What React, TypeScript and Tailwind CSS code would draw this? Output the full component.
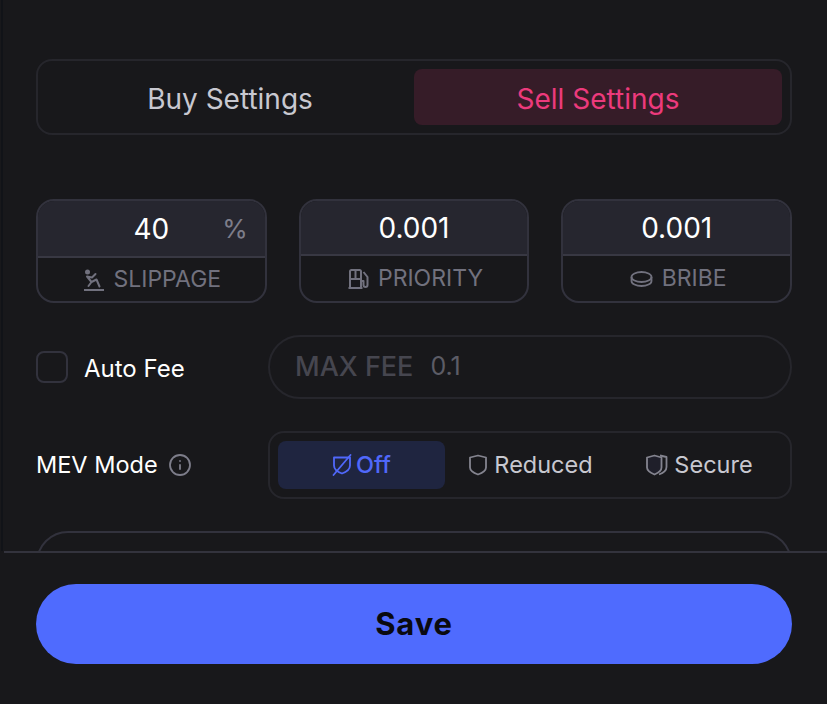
import { Info } from 'lucide-react'

function SlipIcon() {
  return (
    <svg width="20" height="22" viewBox="0 0 20 22" fill="none" stroke="currentColor" strokeWidth="2">
      <circle cx="3.500" cy="3" r="2.500" fill="currentColor" stroke="none" />
      <path d="M3 7.500l5 1 3.500-3.500M3 7.500l4.500 5.500-3 4M7.500 13l5-2.500 3 7" strokeLinecap="round" strokeLinejoin="round" />
      <path d="M0 21h20" />
    </svg>
  )
}

function PumpIcon() {
  return (
    <svg width="21" height="20" viewBox="0 0 21 20" fill="none" stroke="currentColor" strokeWidth="2">
      <path d="M2 19V2.500A1.500 1.500 0 0 1 3.500 1h8A1.500 1.500 0 0 1 13 2.500V19M0.500 19h14M2 10h11M7.500 1v9" />
      <path d="M13 12h2.500v4a2 2 0 0 0 4 0V8l-4-5" strokeLinejoin="round" />
    </svg>
  )
}

function CoinIcon() {
  return (
    <svg width="23" height="16" viewBox="0 0 23 16" fill="none" stroke="currentColor" strokeWidth="1.800">
      <ellipse cx="11.500" cy="6" rx="10" ry="5" />
      <path d="M1.500 6v4c0 2.800 4.500 5 10 5s10-2.200 10-5V6" />
    </svg>
  )
}

function ShieldOffIcon() {
  return (
    <svg width="20" height="22" viewBox="0 0 20 22" fill="none" stroke="currentColor" strokeWidth="1.800">
      <path d="M2 3.500h16v8c0 3.500-4 6.500-8 8-4-1.500-8-4.500-8-8z" strokeLinejoin="round" />
      <path d="M18.500 1L1.500 21" strokeLinecap="round" />
    </svg>
  )
}

function ShieldIcon() {
  return (
    <svg width="18" height="22" viewBox="0 0 18 22" fill="none" stroke="currentColor" strokeWidth="1.800">
      <path d="M1 3.500L9 1.500l8 2v10c0 2.500-4 5.500-8 7-4-1.500-8-4.500-8-7z" strokeLinejoin="round" />
    </svg>
  )
}

function DoubleShieldIcon() {
  return (
    <svg width="22" height="22" viewBox="0 0 22 22" fill="none" stroke="currentColor" strokeWidth="1.800">
      <path d="M14 1.500l6.500 1.500v10c0 3-3.500 6-7.500 7.500" strokeLinejoin="round" />
      <path d="M1 3.500L8.500 1.500l7 2v10c0 2.500-3.500 5.500-7 7-3.500-1.500-7.500-4.500-7.500-7z" fill="#1f1f2a" strokeLinejoin="round" />
    </svg>
  )
}

function StatBox({ value, label, icon, unit }: { value: string; label: string; icon: React.ReactNode; unit?: string }) {
  return (
    <div className="flex-1 h-[104px] rounded-[18px] border-2 border-[#32323d] overflow-hidden flex flex-col">
      <div className={`relative ${unit ? 'h-[57px]' : 'h-[55px]'} shrink-0 bg-[#26262f] border-b-2 border-[#383843] flex items-center justify-center text-[28px] text-white`}>
        <span>{value}</span>
        {unit && <span className="absolute right-[17px] top-[8px] text-[26px] text-[#7d7d8a]">{unit}</span>}
      </div>
      <div className="flex-1 flex items-center justify-center gap-[9px] pl-[3px] text-[23px] text-[#71717e]">
        {icon}
        <span>{label}</span>
      </div>
    </div>
  )
}

export default function App() {
  return (
    <div className="w-[827px] h-[704px] bg-[#18181b] flex flex-col overflow-hidden font-['Inter',sans-serif]">
      <div className="flex-1 min-h-0 overflow-hidden border-l-2 border-[#111318] ml-[1px] pl-[33px] pr-[35px] pt-[59px]">
        {/* Buy / sell tabs */}
        <div className="h-[76px] rounded-[16px] border-2 border-[#26262c] p-[8px] flex">
          <div className="flex-1 flex items-center justify-center text-[28px] pt-[4px] text-[#c8c8d0]">Buy Settings</div>
          <div className="flex-1 rounded-[8px] bg-[#361c28] flex items-center justify-center text-[28px] pt-[4px] text-[#ec3a7c]">Sell Settings</div>
        </div>

        <div className="flex gap-[32px] mt-[64px]">
          <StatBox value="40" unit="%" label="SLIPPAGE" icon={<SlipIcon />} />
          <StatBox value="0.001" label="PRIORITY" icon={<PumpIcon />} />
          <StatBox value="0.001" label="BRIBE" icon={<CoinIcon />} />
        </div>

        <div className="flex items-center mt-[32px]">
          <div className="w-[232px] flex items-center gap-[16px]">
            <div className="w-[32px] h-[32px] rounded-[8px] border-2 border-[#32323d]" />
            <span className="text-[24px] text-white pt-[4px]">Auto Fee</span>
          </div>
          <div className="flex-1 h-[64px] rounded-full border-2 border-[#26262c] flex items-center pl-[25px] gap-[17px] text-[27px] text-[#46464f]">
            <span className="font-medium">MAX FEE</span>
            <span className="text-[#5c5c66] text-[25px]">0.1</span>
          </div>
        </div>

        <div className="flex items-center mt-[32px]">
          <div className="w-[232px] flex items-center gap-[10px]">
            <span className="text-[23.500px] text-white">MEV Mode</span>
            <Info size={24} className="text-[#7d7d8a]" strokeWidth={1.800} />
          </div>
          <div className="flex-1 h-[68px] rounded-[16px] border-2 border-[#26262c] p-[8px] flex text-[23.500px]">
            <div className="w-[167px] rounded-[8px] bg-[#1f2540] flex items-center justify-center gap-[4px] font-medium text-[#5068fa]">
              <ShieldOffIcon />
              <span>Off</span>
            </div>
            <div className="flex-1 flex items-center justify-center gap-[7px] text-[#c8c8d0]">
              <span className="text-[#84848f]"><ShieldIcon /></span>
              <span>Reduced</span>
            </div>
            <div className="w-[165px] flex items-center justify-center gap-[6px] text-[#c8c8d0]">
              <span className="text-[#84848f]"><DoubleShieldIcon /></span>
              <span>Secure</span>
            </div>
          </div>
        </div>

        <div className="h-[68px] mt-[32px] rounded-[32px] border-2 border-[#32323d]" />
      </div>

      {/* Footer */}
      <div className="h-[153px] shrink-0 border-t-2 border-[#33333d] ml-[4px] pl-[32px] pr-[35px] pt-[31px]">
        <button className="w-full h-[80px] rounded-full bg-[#4f6bfe] text-[#0a0a10] text-[31px] font-bold tracking-[0.8px]">Save</button>
      </div>
    </div>
  )
}
